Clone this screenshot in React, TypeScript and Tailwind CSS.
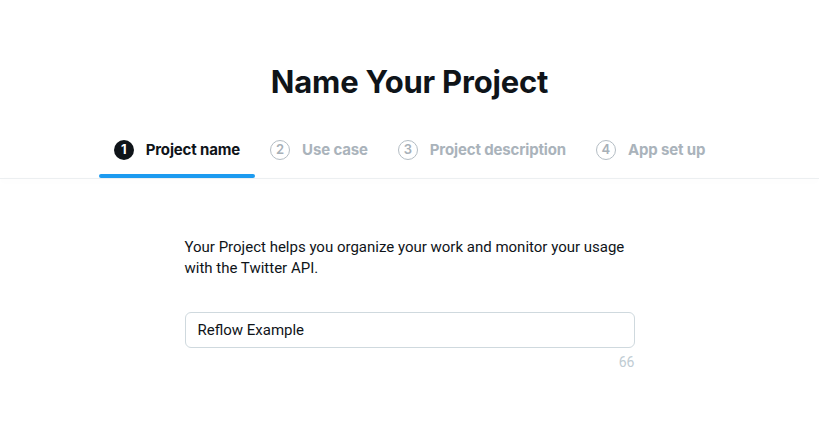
const steps = [
  { n: 1, label: "Project name", active: true },
  { n: 2, label: "Use case", active: false },
  { n: 3, label: "Project description", active: false },
  { n: 4, label: "App set up", active: false },
];

function StepTab({ n, label, active }: { n: number; label: string; active: boolean }) {
  return (
    <div className="flex flex-col">
      <div className="flex h-[48px] items-center gap-[12px] px-[15px]">
        {active ? (
          <span className="flex h-[20px] w-[20px] items-center justify-center rounded-full bg-[#0f1419] text-[13px] font-bold text-white">
            {n}
          </span>
        ) : (
          <span className="flex h-[20px] w-[20px] items-center justify-center rounded-full border-[1.5px] border-[#b4bdc4] text-[13px] font-semibold text-[#a7b0b8]">
            {n}
          </span>
        )}
        <span className={`text-[15px] font-bold tracking-[-0.15px] ${active ? "text-[#0f1419]" : "text-[#aab3bb]"}`}>
          {label}
        </span>
      </div>
      <div className={`h-[4px] rounded-full ${active ? "bg-[#1d9bf0]" : "bg-transparent"}`} />
    </div>
  );
}

export default function App() {
  return (
    <div className="min-h-[423px] w-full bg-white font-['Inter',sans-serif] text-[#0f1419]">
      <header className="flex flex-col items-center pt-[62px]">
        <h1 className="text-[31px] font-bold leading-[40px] tracking-[-0.2px]">Name Your Project</h1>
        <nav className="mt-[24px] flex">
          {steps.map((s) => (
            <StepTab key={s.n} {...s} />
          ))}
        </nav>
      </header>
      <div className="h-[1px] bg-[#eceff1] shadow-[0_2px_6px_rgba(0,0,0,0.05)]" />
      <main className="mx-auto w-[450px] pt-[58px] font-['Roboto',sans-serif]">
        <p className="text-[15px] leading-[21px] text-[#0f1419]">
          Your Project helps you organize your work and monitor your usage with the Twitter API.
        </p>
        <div className="mt-[33px] flex h-[36px] items-center rounded-[6px] border border-[#cfd9de] px-[12px]">
          <input
            className="w-full bg-transparent text-[15px] text-[#0f1419] outline-none"
            defaultValue="Reflow Example"
            type="text"
          />
        </div>
        <div className="mt-[4px] text-right text-[14px] text-[#c0ccd3]">66</div>
      </main>
    </div>
  );
}
